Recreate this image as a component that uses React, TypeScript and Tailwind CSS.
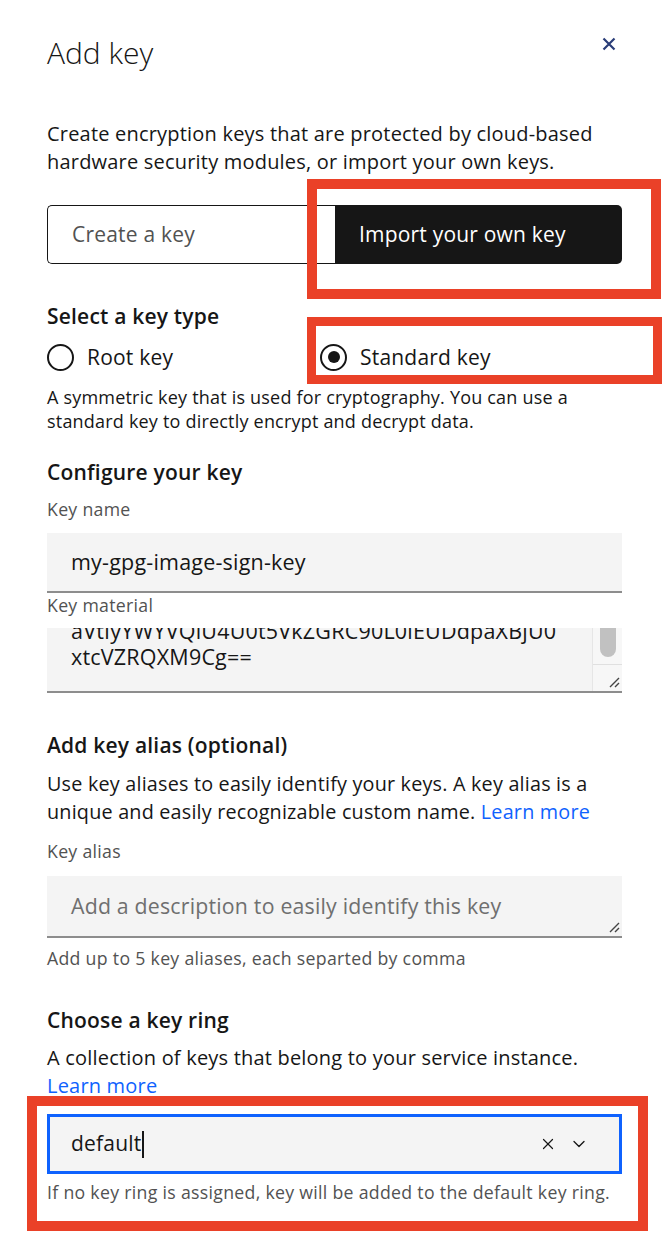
import { X, ChevronDown } from 'lucide-react';

const font = "font-['Open_Sans',Arial,sans-serif] tracking-[0.2px]";

function Heading({ children, className = '' }: { children: React.ReactNode; className?: string }) {
  return <h2 className={`text-[21px] leading-[24px] font-semibold text-[#161616] ${className}`}>{children}</h2>;
}

function Label({ children, className = '' }: { children: React.ReactNode; className?: string }) {
  return <div className={`text-[17.7px] leading-[20px] tracking-[0.3px] text-[#525252] ${className}`}>{children}</div>;
}

function Radio({ checked, label }: { checked?: boolean; label: string }) {
  return (
    <label className="flex items-center gap-[13px]">
      <span className="w-[27px] h-[27px] rounded-full border-2 border-[#161616] flex items-center justify-center">
        {checked && <span className="w-[12px] h-[12px] rounded-full bg-[#161616]" />}
      </span>
      <span className="text-[21px] leading-[28px] text-[#161616]">{label}</span>
    </label>
  );
}

function ResizeGrip() {
  return (
    <svg width="14" height="14" viewBox="0 0 14 14" className="absolute right-[2px] bottom-[3px]">
      <path d="M13 4 L4 13 M13 9 L9 13" stroke="#444" strokeWidth="1.4" />
    </svg>
  );
}

export default function App() {
  return (
    <div className={`relative w-[663px] h-[1239px] bg-white overflow-hidden ${font}`}>
      <div className="pl-[47px] pr-[41px] pt-[36px]">
        <div className="flex justify-between items-start">
          <h1 className="text-[30px] leading-[34px] font-light tracking-normal text-[#161616]">Add key</h1>
          <svg width="14" height="14" viewBox="0 0 14 14" className="mt-[1px] mr-[6px]">
            <path d="M1.5 1.5 L12.5 12.5 M12.5 1.5 L1.5 12.5" stroke="#2a3d78" strokeWidth="2.2" />
          </svg>
        </div>

        <p className="mt-[50px] text-[20px] leading-[28px] text-[#161616]">
          Create encryption keys that are protected by cloud-based hardware security modules, or import your own keys.
        </p>

        <div className="mt-[29px] flex h-[59px] text-[21px]">
          <div className="flex-1 flex items-center pl-[24px] border border-r-0 border-[#161616] rounded-l-[5px] text-[#525252]">
            Create a key
          </div>
          <div className="flex-1 flex items-center pl-[24px] bg-[#161616] rounded-r-[5px] text-white">
            Import your own key
          </div>
        </div>

        <Heading className="mt-[40px]">Select a key type</Heading>
        <div className="mt-[15px] flex">
          <div className="w-[273px]">
            <Radio label="Root key" />
          </div>
          <Radio checked label="Standard key" />
        </div>
        <p className="mt-[14px] text-[18px] leading-[24px] text-[#161616]">
          A symmetric key that is used for cryptography. You can use a standard key to directly encrypt and decrypt data.
        </p>

        <Heading className="mt-[27px]">Configure your key</Heading>
        <Label className="mt-[15px]">Key name</Label>
        <div className="mt-[14px] h-[60px] bg-[#f4f4f4] border-b-2 border-[#8d8d8d] flex items-center pl-[24px] text-[21.5px] text-[#161616]">
          my-gpg-image-sign-key
        </div>
        <Label className="mt-[2px]">Key material</Label>
        <div className="mt-[13px] relative h-[65px] bg-[#f4f4f4] border-b-2 border-[#8d8d8d] overflow-hidden">
          <div className="-mt-[10px] pl-[24px] pr-[40px] text-[21.5px] leading-[26px] text-[#161616] whitespace-nowrap">
            <div>aVtIyYWYVQlU4U0t5VkZGRC90L0lEUDdpaXBjU0</div>
            <div>xtcVZRQXM9Cg==</div>
          </div>
          <div className="absolute right-0 top-0 bottom-0 w-[30px] bg-[#f7f7f7] border-l border-[#e6e6e6] flex flex-col">
            <div className="h-[36px] flex justify-center">
              <div className="w-[16px] h-[29px] bg-[#c1c1c1] rounded-b-[8px]" />
            </div>
            <div className="relative flex-1 border-t border-[#e0e0e0]">
              <ResizeGrip />
            </div>
          </div>
        </div>

        <Heading className="mt-[40px]">Add key alias (optional)</Heading>
        <p className="mt-[13px] text-[19.8px] leading-[28px] text-[#161616]">
          Use key aliases to easily identify your keys. A key alias is a unique and easily recognizable custom name.{' '}
          <span className="text-[#0f62fe]">Learn more</span>
        </p>
        <Label className="mt-[15px]">Key alias</Label>
        <div className="mt-[15px] relative h-[62px] bg-[#f4f4f4] border-b-2 border-[#8d8d8d] flex items-center pl-[24px] text-[21.3px] text-[#6f6f6f]">
          Add a description to easily identify this key
          <ResizeGrip />
        </div>
        <Label className="mt-[10px]">Add up to 5 key aliases, each separted by comma</Label>

        <Heading className="mt-[40px]">Choose a key ring</Heading>
        <p className="mt-[12px] text-[20px] leading-[28px] text-[#161616]">
          A collection of keys that belong to your service instance.
          <br />
          <span className="text-[#0f62fe]">Learn more</span>
        </p>
        <div className="mt-[14px] h-[60px] bg-[#f4f4f4] border-[3px] border-[#0f62fe] flex items-center pl-[21px] pr-[30px] text-[21px] text-[#161616]">
          <span>default</span>
          <span className="w-[2px] h-[27px] bg-[#161616] ml-[1px]" />
          <X className="ml-auto" size={18} strokeWidth={1.6} color="#161616" />
          <ChevronDown className="ml-[12px]" size={20} strokeWidth={1.6} color="#161616" />
        </div>
        <Label className="mt-[8px]">If no key ring is assigned, key will be added to the default key ring.</Label>
      </div>

      <div className="absolute left-[307px] top-[179px] w-[354px] h-[120px] border-[10px] border-[#ea4128]" />
      <div className="absolute left-[307px] top-[317px] w-[355px] h-[67px] border-[9px] border-[#ea4128]" />
      <div className="absolute left-[27px] top-[1096px] w-[621px] h-[135px] border-[10px] border-[#ea4128]" />
    </div>
  );
}
